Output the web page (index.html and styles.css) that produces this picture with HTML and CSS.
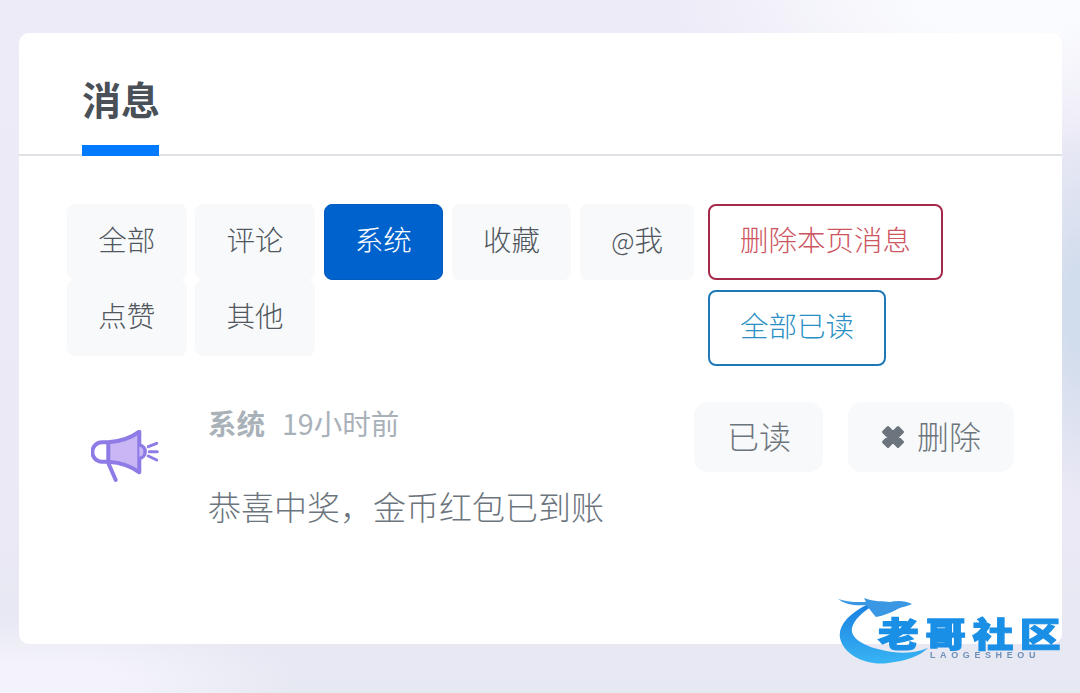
FILE: index.html
```html
<!DOCTYPE html>
<html lang="zh">
<head>
<meta charset="utf-8">
<title>消息</title>
<link rel="stylesheet" href="styles.css">
</head>
<body>
<main class="card">
  <nav class="tabs"><a class="tab">消息</a></nav>
  <section class="filters">
    <div class="filter-group">
      <a class="chip">全部</a>
      <a class="chip">评论</a>
      <a class="chip active">系统</a>
      <a class="chip">收藏</a>
      <a class="chip"><span class="at">@</span>我</a>
      <a class="chip">点赞</a>
      <a class="chip">其他</a>
    </div>
    <div class="action-group">
      <a class="outline danger">删除本页消息</a>
      <a class="outline info">全部已读</a>
    </div>
  </section>
  <article class="message">
    <div class="msg-icon">
      <svg width="68" height="54" viewBox="0 0 68 54" fill="none">
        <path d="M17.300 12.300 Q36 11 48.300 1.700 V42.300 Q36 33 17.300 31.700 Z" fill="#c9b6f5"/>
        <path d="M17.300 12.300 Q36 11 48.300 1.700 V42.300 Q36 33 17.300 31.700 H11 A9.700 9.700 0 0 1 11 12.300 Z M17.300 12.300 V31.700" stroke="#8f7be6" stroke-width="4" stroke-linejoin="round" stroke-linecap="round"/>
        <path d="M48.300 15 A6.700 6.700 0 0 1 48.300 28.300" stroke="#8f7be6" stroke-width="3.500" fill="#c9b6f5"/>
        <path d="M17.300 33 L24.700 50" stroke="#8f7be6" stroke-width="4" stroke-linecap="round"/>
        <path d="M57.300 16.700 L65.700 13.300 M58.300 21.700 H66.300 M57.300 26 L65.700 30" stroke="#8f7be6" stroke-width="3" stroke-linecap="round"/>
      </svg>
    </div>
    <div class="msg-body">
      <div class="msg-meta"><strong class="msg-type">系统</strong><span class="msg-time">19小时前</span></div>
      <p class="msg-text">恭喜中奖，金币红包已到账</p>
    </div>
    <div class="msg-actions">
      <a class="soft read">已读</a>
      <a class="soft remove"><svg class="x-icon" width="24" height="24" viewBox="0 0 24 24"><path d="M2.500 7 7 2.500 12 7.500 17 2.500 21.500 7 16.500 12 21.500 17 17 21.500 12 16.500 7 21.500 2.500 17 7.500 12Z" fill="#6c757d" stroke="#6c757d" stroke-width="3" stroke-linejoin="round"/></svg>删除</a>
    </div>
  </article>
</main>
<div class="watermark">
  <svg class="wm-dragon" width="92" height="72" viewBox="0 0 92 72" fill="none">
    <defs>
      <linearGradient id="wmg" x1="0" y1="0" x2="0" y2="1">
        <stop offset="0" stop-color="#1a7fe0"/>
        <stop offset="1" stop-color="#38b4f4"/>
      </linearGradient>
    </defs>
    <path d="M30 8 C10 18 0 30 2 42 C6 60 30 70 50 67 C68 65 82 60 90 52 C74 58 60 58 44 54 C26 50 12 42 14 32 C16 24 24 16 36 9 Z" fill="url(#wmg)"/>
    <path d="M0 3 C12 7 22 6 28 6 L26 2 C36 6 46 5 52 6 C60 4 68 5 74 8 C68 11 62 11 58 14 C52 17 44 20 38 21 C34 17 32 13 28 9 C18 10 8 9 0 3Z" fill="#3a97e4"/>
  </svg>
  <span class="wm-title">老哥社区</span>
  <span class="wm-sub">LAOGESHEOU</span>
</div>
</body>
</html>
```
FILE: styles.css
```css
* { box-sizing: border-box; }
html, body { margin: 0; height: 100%; }
body {
  width: 1080px;
  height: 693px;
  overflow: hidden;
  padding: 33px 18px 49px 19px;
  position: relative;
  background:
    radial-gradient(ellipse 330px 150px at 1000px 0, #fafbfe 25%, rgba(250, 251, 254, 0) 100%),
    radial-gradient(ellipse 70px 190px at 1080px 310px, #d1dcec 20%, rgba(209, 220, 236, 0) 100%),
    radial-gradient(ellipse 260px 60px at 40px 680px, #f4f3fb 30%, rgba(244, 243, 251, 0) 100%),
    linear-gradient(180deg, #edebf7 0%, #ebe9f5 70%, #e6e8f2 100%);
  font-family: "Noto Sans CJK SC", "Noto Sans", sans-serif;
  font-weight: 300;
}
.card {
  height: 611px;
  background: #fff;
  border-radius: 10px;
}
.tabs {
  height: 123px;
  padding-left: 63px;
  border-bottom: 2px solid #dee2e6;
  display: flex;
  align-items: flex-end;
}
.tab {
  display: block;
  width: 77px;
  height: 112px;
  margin-bottom: -2px;
  padding-top: 21px;
  border-bottom: 11px solid #007bff;
  font-size: 39px;
  line-height: 66px;
  font-weight: 700;
  color: #495057;
  white-space: nowrap;
}
.filters {
  display: flex;
  align-items: flex-start;
  padding: 48px 0 0 48px;
}
.filter-group {
  width: 641px;
  display: flex;
  flex-wrap: wrap;
  align-content: flex-start;
  column-gap: 8.750px;
}
.chip {
  height: 76px;
  padding: 0 31.250px;
  border-radius: 8px;
  background: #f8f9fa;
  color: #50575e;
  font-size: 28.500px;
  line-height: 70px;
}
.at { font-size: 25.500px; }
.chip.active {
  background: #0062cc;
  color: #fff;
  border: 1px solid #005cbf;
  line-height: 68px;
  padding: 0 30.250px;
}
.action-group {
  display: flex;
  flex-direction: column;
  align-items: flex-start;
  gap: 10px;
}
.outline {
  height: 76px;
  padding: 0 30px;
  border: 2px solid;
  border-radius: 8px;
  font-size: 28.500px;
  line-height: 66px;
  background: #fff;
}
.danger { border-color: #a52a4a; color: #cc5560; }
.info { border-color: #1f78b8; color: #2a8fc4; }
.message {
  display: flex;
  padding: 36px 48px 0 72px;
}
.msg-icon { width: 117px; padding-top: 28px; flex: none; }
.msg-body { flex: 1; }
.msg-meta {
  display: flex;
  align-items: center;
  gap: 17px;
  height: 40px;
  font-size: 28.500px;
  color: #a9b1b9;
}
.msg-type { font-weight: 700; }
.msg-time { font-weight: 400; }
.msg-text { margin: 40px 0 0; font-size: 33px; line-height: 48px; color: #6c757d; }
.msg-actions { display: flex; gap: 25px; height: 70px; }
.soft {
  display: flex;
  align-items: center;
  height: 70px;
  padding: 0 33px 5px;
  border-radius: 14px;
  background: #f8f9fa;
  color: #6c757d;
  font-size: 32px;
}
.read { padding-right: 32px; }
.x-icon { margin: 5px 12px 0 0; }
.watermark {
  position: absolute;
  left: 838px;
  top: 596px;
  width: 224px;
  height: 72px;
  filter: blur(0.7px);
}
.wm-dragon { position: absolute; left: 0; top: 0; }
.wm-title {
  position: absolute;
  left: 40px;
  top: 20px;
  font-size: 34px;
  line-height: 34px;
  font-weight: 900;
  letter-spacing: 5.400px;
  white-space: nowrap;
  color: #1a8fe6;
  -webkit-text-stroke: 1.200px #1a8fe6;
  transform: scaleX(1.2);
  transform-origin: left center;
}
.wm-sub {
  position: absolute;
  left: 92px;
  top: 54px;
  font-family: "Liberation Sans", sans-serif;
  font-size: 9px;
  line-height: 10px;
  font-weight: 700;
  letter-spacing: 4.600px;
  white-space: nowrap;
  color: #6f8fb8;
}
```
